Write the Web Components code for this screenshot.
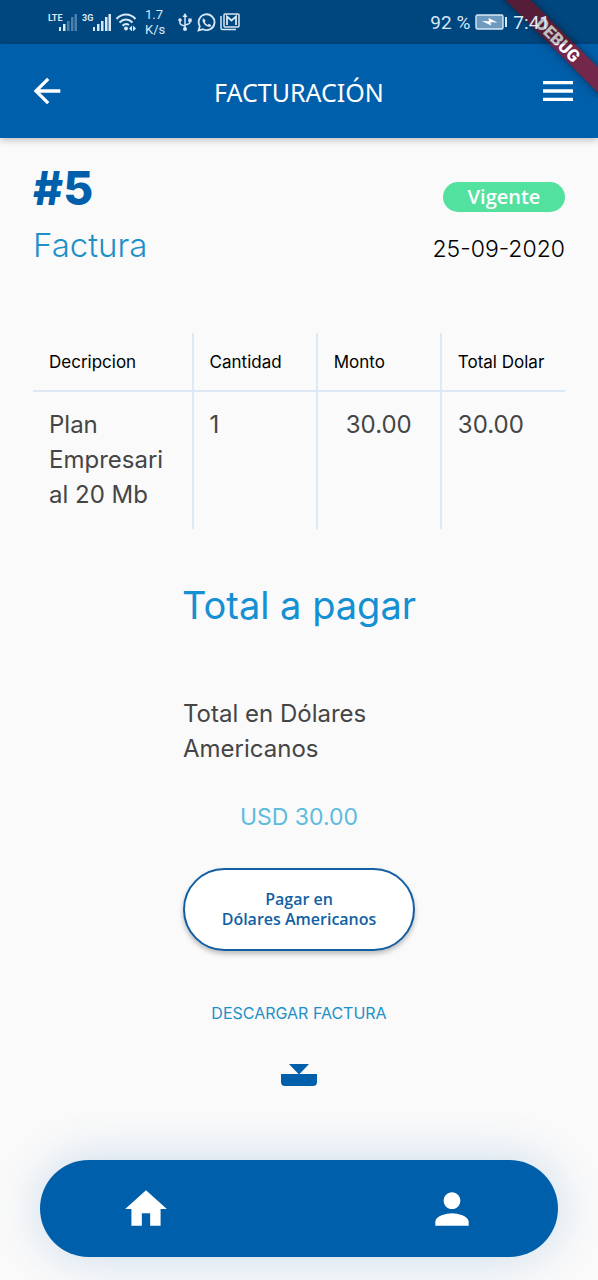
<!DOCTYPE html>
<html lang="es">
<head>
<meta charset="utf-8">
<meta name="viewport" content="width=device-width, initial-scale=1">
<title>Facturación</title>
<style>
  body { margin: 0; background: #fafafa; font-family: Inter, "Open Sans", sans-serif; color: #000; }
</style>
</head>
<body>
<invoice-app></invoice-app>

<script>
const define = (name, html) => {
  const template = document.createElement('template');
  template.innerHTML = html;
  customElements.define(name, class extends HTMLElement {
    constructor() {
      super();
      this.attachShadow({ mode: 'open' }).append(template.content.cloneNode(true));
    }
  });
};

define('phone-status', `
  <style>
    :host { display: flex; justify-content: space-between; align-items: center; height: 44px; padding: 0 48px;
      background: rgba(0, 0, 0, .25); color: #d9e8f5; font-family: Roboto, sans-serif; font-size: 19px; }
    .side, .signal { display: flex; align-items: center; }
    .signal { align-items: flex-start; }
    .signal b { width: 11px; font: bold 9px/10px "Liberation Sans Narrow", Roboto, sans-serif; white-space: nowrap; }
    .speed { font-size: 13px; line-height: 15px; margin: 0 12px 0 9px; }
    svg { display: block; flex: none; fill: currentColor; }
    .net { gap: 5px; }
    .apps { display: flex; gap: 4px; align-items: center; }
    .power { gap: 5px; white-space: nowrap; }
  </style>
  <div class="side">
    <div class="side net">
      <span class="signal"><b>LTE</b>
        <svg width="18" height="18" viewBox="0 0 18 18"><path d="M0 14h2v4H0zM4 11h2.500v7H4z"/><path opacity=".35" d="M8 8h2.500v10H8zM12 4h2.500v14H12zM15.500 1H18v17h-2.500z"/></svg></span>
      <span class="signal"><b>3G</b>
        <svg width="18" height="18" viewBox="0 0 18 18"><path d="M0 14h2v4H0zM4 11h2.500v7H4zM8 8h2.500v10H8zM12 4h2.500v14H12zM15.500 1H18v17h-2.500z"/></svg></span>
      <svg width="20" height="18" viewBox="0 0 20 18"><g fill="none" stroke="currentColor" stroke-width="2"><path d="M0.500 6C6 0 14 0 19.500 6M3.500 9.500C7.500 5.500 12.500 5.500 16.500 9.500M6.500 12.800C8.500 10.700 11 10.500 13 12"/></g><circle cx="10" cy="15.500" r="2"/><path d="M13 15.500l3-3v6zM20 15.500l-3-3v6z"/></svg>
    </div>
    <span class="speed">1.7<br>K/s</span>
    <div class="apps">
      <svg width="16" height="18" viewBox="0 0 16 18"><g fill="none" stroke="currentColor" stroke-width="1.500"><path d="M8 2v14M3 7v3q0 2 5 3M13 7v2q0 2-5 3"/></g><path d="M8 0l2.500 4h-5z"/><circle cx="8" cy="16" r="2"/><circle cx="3" cy="7" r="1.800"/><path d="M11.300 5.500h3.400v3.400h-3.400z"/></svg>
      <svg width="19" height="19" viewBox="0 0 24 24"><path fill="none" stroke="currentColor" stroke-width="2.300" d="M2 22l1.500-5.300a10 10 0 1 1 4 3.800z"/><path d="M8.500 6.500c-1 .5-1.700 1.600-1.500 3 .7 4 4 7.300 8 8 1.500.2 2.700-.6 3-2l-3-1.800-1.500 1.300c-1.800-.8-3-2-3.700-3.600l1.200-1.400z"/></svg>
      <svg width="20" height="18" viewBox="0 0 20 18"><g fill="none" stroke="currentColor"><path stroke-width="1.500" d="M1 3v12q0 1.500 1.500 1.500H16"/><rect stroke-width="1.500" x="4" y="1" width="15" height="13" rx="1"/><path stroke-width="1.800" d="M7 12V3.500l4.500 4 4.500-4V12"/></g></svg>
    </div>
  </div>
  <div class="side power">
    <span>92 %</span>
    <svg width="33" height="16" viewBox="0 0 33 16"><rect x="1" y="1" width="27" height="14" rx="1.500" fill="#6f9abf" stroke="currentColor" stroke-width="1.400"/><path d="M30 3h2v10h-2z"/><path fill="#fff" d="M7 7l7 .3L13.500 4l9 4.500-7-.2.500 3.200z"/></svg>
    <span>7:41</span>
  </div>`);

define('debug-ribbon', `
  <style>
    :host { position: absolute; top: 0; right: 0; width: 98px; height: 98px; overflow: hidden; pointer-events: none; }
    span { position: absolute; left: 50%; top: 50%; width: 160px; margin: -18px 0 0 -80px; transform: translate(9px, 0) rotate(45deg);
      background: rgba(160, 18, 38, .72); color: #fff; box-shadow: 0 0 8px rgba(0, 0, 0, .45);
      font: 900 17px/18px Roboto, sans-serif; text-align: center; }
  </style>
  <span>DEBUG</span>`);

define('app-header', `
  <style>
    :host { display: grid; grid-template-columns: 40px 1fr 40px; align-items: center; height: 94px; padding: 0 20px 0 27px;
      background: #005fab; color: #fff; box-shadow: 0 2px 7px rgba(0, 0, 0, .25); }
    button { all: unset; display: block; width: 40px; height: 40px; cursor: pointer; }
    svg { display: block; width: 40px; height: 40px; fill: currentColor; }
    h1 { margin: 0; padding: 2px 7px 0 0; text-align: center; font: 400 25px/34px "Noto Sans", sans-serif; }
  </style>
  <button aria-label="Volver"><svg viewBox="0 0 24 24"><path d="M20 11H7.830l5.590-5.590L12 4l-8 8 8 8 1.410-1.410L7.830 13H20z"/></svg></button>
  <h1><slot></slot></h1>
  <button aria-label="Menú"><svg viewBox="0 0 24 24"><path d="M3 18h18v-2H3zm0-5h18v-2H3zm0-7v2h18V6z"/></svg></button>`);

define('invoice-heading', `
  <style>
    :host { display: flex; justify-content: space-between; }
    h2, p { margin: 0; }
    h2 { color: #005fab; font-size: 46px; line-height: 50px; font-weight: 800; }
    .kind { margin-top: 8px; color: #1e90c8; font-size: 33px; line-height: 48px; font-weight: 300; }
    .meta { display: flex; flex-direction: column; align-items: flex-end; padding-top: 19px; }
    .badge { width: 122px; border-radius: 15px; background: #52e19f; color: #fff; text-align: center;
      font: 600 20px/30px "Open Sans", sans-serif; }
    time { margin-top: 20px; font-size: 23px; line-height: 34px; font-weight: 300; }
  </style>
  <div><h2><slot name="number"></slot></h2><p class="kind"><slot name="kind"></slot></p></div>
  <div class="meta"><span class="badge"><slot name="status"></slot></span><time datetime="2020-09-25"><slot name="date"></slot></time></div>`);

define('invoice-lines', `
  <style>
    :host { display: block; }
    table { width: 100%; border-collapse: collapse; table-layout: fixed; }
    .first { width: 30%; }
    th, td { box-sizing: border-box; padding: 0 16px; text-align: left; vertical-align: top; font-weight: 400; }
    th + th, td + td { border-left: 2px solid #dce9f4; }
    th { height: 58px; vertical-align: middle; border-bottom: 2px solid #dce9f4; font-size: 17px; line-height: 24px; white-space: nowrap; }
    td { height: 138px; padding-top: 15px; color: #454545; font-size: 24px; line-height: 35px; overflow-wrap: anywhere; }
    .amount { text-align: center; }
  </style>
  <table>
    <thead><tr><th class="first">Decripcion</th><th>Cantidad</th><th>Monto</th><th>Total Dolar</th></tr></thead>
    <tbody><tr><td>Plan Empresarial 20 Mb</td><td>1</td><td class="amount">30.00</td><td>30.00</td></tr></tbody>
  </table>`);

define('payment-summary', `
  <style>
    :host { display: flex; flex-direction: column; align-items: center; }
    h2, p { margin: 0; }
    h2 { color: #1590d3; font-size: 38px; line-height: 54px; font-weight: 400; white-space: nowrap; }
    .label { width: 232px; margin-top: 64px; color: #454545; font-size: 24px; line-height: 35px; }
    .total { margin-top: 33px; color: #5dbcdd; font-size: 23px; line-height: 36px; }
    .pay { width: 232px; height: 83px; margin-top: 33px; padding: 0 0 2px; border: 2px solid #125fa3; border-radius: 42px; background: #fff; color: #125fa3;
      box-shadow: 0 3px 5px rgba(0, 0, 0, .25); font: 600 16px/20px "Open Sans", sans-serif; cursor: pointer; }
    a { display: flex; flex-direction: column; align-items: center; gap: 39px; margin-top: 50px; color: #1e90c8; font-size: 16px; line-height: 24px; text-decoration: none; }
    svg { display: block; }
  </style>
  <h2>Total a pagar</h2>
  <p class="label">Total en Dólares Americanos</p>
  <p class="total">USD 30.00</p>
  <button class="pay">Pagar en<br>Dólares Americanos</button>
  <a href="#factura">DESCARGAR FACTURA
    <svg width="36" height="22" viewBox="0 0 36 22" fill="#005fab"><path d="M8 0h20l-9.500 10H36v8q0 4-4 4H4q-4 0-4-4v-8h17.500z"/></svg></a>`);

define('bottom-nav', `
  <style>
    :host { display: block; }
    nav { display: flex; justify-content: space-between; align-items: center; height: 97px; padding: 0 81px; border-radius: 49px;
      background: #005fab; box-shadow: 0 0 50px rgba(0, 95, 171, .2); }
    a { color: #fff; }
    svg { display: block; width: 50px; height: 50px; fill: currentColor; }
  </style>
  <nav>
    <a href="#inicio" aria-label="Inicio"><svg viewBox="0 0 24 24"><path d="M10 20v-6h4v6h5v-8h3L12 3 2 12h3v8z"/></svg></a>
    <a href="#perfil" aria-label="Perfil"><svg viewBox="0 0 24 24"><path d="M12 12c2.210 0 4-1.790 4-4s-1.790-4-4-4-4 1.790-4 4 1.790 4 4 4zm0 2c-2.670 0-8 1.340-8 4v2h16v-2c0-2.660-5.330-4-8-4z"/></svg></a>
  </nav>`);

define('invoice-app', `
  <style>
    :host { position: relative; display: flex; flex-direction: column; min-height: 100vh; overflow: hidden; }
    .top { position: relative; background: #005fab; }
    /* The system bar's scrim tints whatever the ribbon draws beneath it. */
    phone-status { position: relative; z-index: 1; }
    main { padding: 25px 33px 32px; }
    invoice-lines { margin-top: 64px; }
    payment-summary { margin-top: 49px; }
    bottom-nav { margin: auto 40px 23px; }
  </style>
  <div class="top">
    <phone-status></phone-status>
    <app-header>FACTURACIÓN</app-header>
    <debug-ribbon></debug-ribbon>
  </div>
  <main>
    <invoice-heading>
      <span slot="number">#5</span><span slot="kind">Factura</span>
      <span slot="status">Vigente</span><span slot="date">25-09-2020</span>
    </invoice-heading>
    <invoice-lines></invoice-lines>
    <payment-summary></payment-summary>
  </main>
  <bottom-nav></bottom-nav>`);
</script>
</body>
</html>
